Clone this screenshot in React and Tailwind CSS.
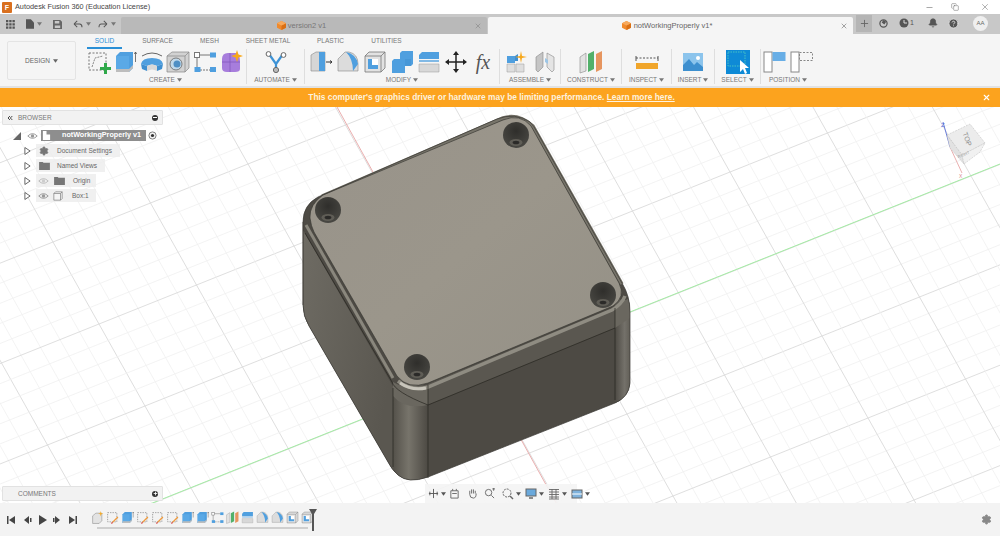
import { Fragment } from 'react';
import { ChevronsLeft, Settings, Bell, HelpCircle, Plus, X, Minus, Copy } from 'lucide-react';

const blue = '#4f9fdf';

const Caret = ({ className = '' }) => (
  <svg viewBox="0 0 6 4" className={`inline-block w-[5px] h-[4px] ${className}`}>
    <path d="M0 0H6L3 4Z" fill="currentColor" />
  </svg>
);

const Sketch = ({ className = 'w-6 h-6' }) => (
  <svg viewBox="0 0 24 24" className={className}>
    <rect x="2" y="3" width="17" height="17" fill="none" stroke="#777" strokeWidth="1" strokeDasharray="2 1.5" />
    <path d="M5 17L8 8L16 6" fill="none" stroke="#888" strokeWidth="1" strokeDasharray="2 1" />
    <path d="M17 13h3v4h4v3h-4v4h-3v-4h-4v-3h4z" fill="#2fa84a" />
  </svg>
);
const StepSketch = ({ className }) => (
  <svg viewBox="0 0 24 24" className={className}>
    <rect x="3" y="3" width="17" height="17" fill="none" stroke="#777" strokeWidth="1.2" strokeDasharray="2.5 2" />
    <path d="M12 21L22 11" stroke="#ef9a3c" strokeWidth="2.6" />
    <path d="M10 23L12 21" stroke="#d23c3c" strokeWidth="2.4" />
  </svg>
);
const StepForm = ({ className }) => (
  <svg viewBox="0 0 24 24" className={className}>
    <path d="M3 9L9 4H20V18L15 23H3Z" fill="#e3e3e3" stroke="#888" strokeWidth="1" />
    <path d="M18 0L19 4L23 5L19 6L18 10L17 6L13 5L17 4Z" fill="#f7a81b" />
  </svg>
);
const Extrude = ({ className = 'w-6 h-6' }) => (
  <svg viewBox="0 0 24 24" className={className}>
    <path d="M3 6L7 2H20V18L16 22H3Z" fill={blue} />
    <path d="M3 6H16V22H3Z" fill="#5aa9e6" />
    <path d="M3 19H16V22H3ZM16 19L20 15V18L16 22Z" fill="#bdbdbd" />
    <path d="M22.5 2V12M21.3 4L22.5 2L23.700 4" fill="none" stroke="#555" strokeWidth="0.8" />
  </svg>
);
const Revolve = ({ className = 'w-6 h-6' }) => (
  <svg viewBox="0 0 24 24" className={className}>
    <path d="M2 6Q12 0 22 6" fill="none" stroke="#666" strokeWidth="1" />
    <path d="M1 14Q2 8 12 8Q22 8 23 14L17 16Q12 13 7 16Z" fill={blue} />
    <path d="M1 14L7 16V21L2 19ZM23 14L17 16V21L22 19Z" fill="#3f8fd0" />
    <path d="M7 16Q12 13 17 16V21Q12 18 7 21Z" fill="#d8d8d8" />
  </svg>
);
const Hole = ({ className = 'w-6 h-6' }) => (
  <svg viewBox="0 0 24 24" className={className}>
    <path d="M1 6L6 2H23V18L19 22H1Z" fill="#d2d2d2" stroke="#888" strokeWidth="0.7" />
    <path d="M1 6H19V22M19 6L23 2" fill="none" stroke="#888" strokeWidth="0.7" />
    <circle cx="10" cy="14" r="6" fill="#c2d9ea" stroke="#666" strokeWidth="0.8" />
    <circle cx="11" cy="14" r="3.5" fill="#4f8fc4" />
  </svg>
);
const Pattern = ({ className = 'w-6 h-6' }) => (
  <svg viewBox="0 0 24 24" className={className}>
    <path d="M5 5H17M4 7V18" stroke="#777" strokeWidth="1" fill="none" />
    <path d="M7 20H17" stroke="#777" strokeWidth="1" strokeDasharray="2 1" />
    <rect x="1.5" y="2.5" width="5" height="5" fill="#fff" stroke="#777" />
    <rect x="17" y="2.5" width="6" height="5" fill={blue} />
    <rect x="1.5" y="17" width="6" height="5" fill={blue} />
    <rect x="17" y="17" width="6" height="5" fill={blue} />
  </svg>
);
const Form = ({ className = 'w-6 h-6' }) => (
  <svg viewBox="0 0 24 24" className={className}>
    <path d="M3 9Q3 3 9 3H17Q21 5 21 11V19Q21 22 16 22H8Q3 22 3 18Z" fill="#a77ddc" />
    <path d="M11 3V22M3 12H21" stroke="#8458bc" strokeWidth="0.8" fill="none" />
    <path d="M18 0L19.500 4.500L24 6L19.500 7.500L18 12L16.500 7.500L12 6L16.500 4.500Z" fill="#f7a81b" />
  </svg>
);
const Automate = ({ className = 'w-6 h-6' }) => (
  <svg viewBox="0 0 24 24" className={className}>
    <path d="M5 4L12 14L19 4M12 14V20" fill="none" stroke="#3e93d6" strokeWidth="2.2" />
    <circle cx="4.5" cy="4" r="2.4" fill="#fff" stroke="#666" />
    <circle cx="19.5" cy="5" r="2.4" fill="#fff" stroke="#666" />
    <circle cx="12" cy="20" r="2.6" fill="#bbb" stroke="#666" />
  </svg>
);
const PressPull = ({ className = 'w-6 h-6' }) => (
  <svg viewBox="0 0 24 24" className={className}>
    <path d="M2 5L7 2H16V21H7L2 21Z" fill="#d6d6d6" stroke="#888" strokeWidth="0.6" />
    <path d="M10 2H16V21H10Z" fill={blue} />
    <path d="M17 12H23M21 10.500L23 12L21 13.500" stroke="#333" strokeWidth="1" fill="none" />
  </svg>
);
const Fillet = ({ className = 'w-6 h-6' }) => (
  <svg viewBox="0 0 24 24" className={className}>
    <path d="M2 9L9 2H13Q22 4 22 14V21H2Z" fill="#dcdcdc" stroke="#888" strokeWidth="0.6" />
    <path d="M10 2Q20 4 22 14L17 21Q17 9 10 2Z" fill={blue} />
  </svg>
);
const Shell = ({ className = 'w-6 h-6' }) => (
  <svg viewBox="0 0 24 24" className={className}>
    <path d="M2 6L6 2H22V18L18 22H2Z" fill="#e2e2e2" stroke="#777" strokeWidth="0.8" />
    <path d="M2 6H18V22M18 6L22 2" fill="none" stroke="#777" strokeWidth="0.8" />
    <path d="M5 9H15V19H5Z" fill="#fff" />
    <path d="M5 9H9V15H15V19H5Z" fill={blue} />
  </svg>
);
const Combine = ({ className = 'w-6 h-6' }) => (
  <svg viewBox="0 0 24 24" className={className}>
    <path d="M10 3L12 1H23V14L21 16H15V23H2V11L4 9H10Z" fill={blue} />
    <path d="M12 9H21V16H15V9Z" fill="#3f8fd0" opacity="0.5" />
  </svg>
);
const Offset = ({ className = 'w-6 h-6' }) => (
  <svg viewBox="0 0 24 24" className={className}>
    <path d="M2 5L5 2H22V9H2Z" fill={blue} />
    <path d="M2 11H22" stroke="#4f9fdf" strokeWidth="1.4" />
    <path d="M2 14H22V22H2Z" fill="#d8d8d8" stroke="#999" strokeWidth="0.5" />
  </svg>
);
const Move = ({ className = 'w-6 h-6' }) => (
  <svg viewBox="0 0 24 24" className={className}>
    <path d="M12 3V21M3 12H21" stroke="#222" strokeWidth="1.5" />
    <path d="M12 1L15 5H9ZM12 23L15 19H9ZM1 12L5 9V15ZM23 12L19 9V15Z" fill="#222" />
  </svg>
);
const Joint = ({ className = 'w-6 h-6' }) => (
  <svg viewBox="0 0 24 24" className={className}>
    <path d="M3 6H11V13H3Z" fill={blue} />
    <path d="M11 6L14 4V11H11Z" fill="#3f8fd0" />
    <path d="M3 14H11V22H3ZM12 14H20V22H12Z" fill="#dedede" stroke="#999" strokeWidth="0.5" />
    <path d="M17 1L18 6L23 7L18 8L17 13L16 8L11 7L16 6Z" fill="#f7a81b" />
  </svg>
);
const Joint2 = ({ className = 'w-6 h-6' }) => (
  <svg viewBox="0 0 24 24" className={className}>
    <path d="M3 7L10 2V17L5 22L3 20Z" fill="#c5c5c5" stroke="#888" strokeWidth="0.6" />
    <path d="M21 7L14 3V17L19 22L21 20Z" fill="#e4e4e4" stroke="#888" strokeWidth="0.6" />
    <path d="M12 8L15 10V14L12 12Z" fill="#9dc6e6" />
  </svg>
);
const Construct = ({ className = 'w-6 h-6' }) => (
  <svg viewBox="0 0 24 24" className={className}>
    <path d="M1 7L7 3V21L1 23Z" fill="#e2e2e2" stroke="#888" strokeWidth="0.6" />
    <path d="M9 4L15 1V19L9 22Z" fill="#52b06a" />
    <path d="M17 4L23 1V19L17 22Z" fill="#e6955f" />
  </svg>
);
const Inspect = ({ className = 'w-6 h-6' }) => (
  <svg viewBox="0 0 24 24" className={className}>
    <rect x="1" y="13" width="22" height="6" fill="#f0a52a" />
    <path d="M1 8H23" stroke="#555" strokeDasharray="2 1.5" strokeWidth="1" />
    <path d="M1 6V11M23 6V11" stroke="#555" strokeWidth="1" />
  </svg>
);
const Insert = ({ className = 'w-6 h-6' }) => (
  <svg viewBox="0 0 24 24" className={className}>
    <rect x="2" y="3" width="20" height="18" fill="#8cc4ec" />
    <path d="M2 21V15L8 9L13 15L16 12L22 17V21Z" fill="#3d8fcf" />
    <circle cx="17" cy="8" r="2" fill="#fff" />
  </svg>
);
const Select = () => (
  <svg viewBox="0 0 24 24" className="w-6 h-6">
    <rect x="0" y="0" width="24" height="24" fill="#0e8ad6" />
    <rect x="2" y="2" width="17" height="14" fill="none" stroke="#57d0c0" strokeWidth="0.8" strokeDasharray="1.5 1" />
    <path d="M14 10V22L17 19L19 24L21 23L19 18H23Z" fill="#fff" />
  </svg>
);
const Align = ({ active }) => (
  <svg viewBox="0 0 24 24" className="w-6 h-6">
    <rect x="1" y="2" width="8" height="20" fill="#fff" stroke="#888" />
    {active
      ? <rect x="9.5" y="2" width="13" height="9" fill="#68aee6" />
      : <rect x="9.5" y="2.5" width="13" height="8" fill="none" stroke="#888" strokeDasharray="2 1.5" />}
  </svg>
);

const FolderIcon = () => (
  <svg viewBox="0 0 12 10" className="w-[11px] h-[9px]">
    <path d="M0 1H4L5 2H12V10H0Z" fill="#777" />
  </svg>
);
const Eye = ({ off }) => (
  <svg viewBox="0 0 14 10" className="w-[11px] h-[8px]">
    <path d="M1 5Q7 -1 13 5Q7 11 1 5Z" fill="none" stroke={off ? '#bbb' : '#999'} strokeWidth="1.2" />
    <circle cx="7" cy="5" r="2.2" fill={off ? '#ccc' : '#999'} />
  </svg>
);
const Arrow = () => (
  <svg viewBox="0 0 8 10" className="w-[7px] h-[10px] shrink-0">
    <path d="M1 1L7 5L1 9Z" fill="#fff" stroke="#555" />
  </svg>
);

const menuTabs = [
  ['SOLID', 'w-[35px] text-[#2a8fd6] border-b-2 border-[#2a8fd6]'],
  ['SURFACE', 'w-[35px] ml-[18px]'],
  ['MESH', 'w-[35px] ml-[17px]'],
  ['SHEET METAL', 'w-[50px] ml-[16px]'],
  ['PLASTIC', 'w-[35px] ml-[20px]'],
  ['UTILITIES', 'w-[35px] ml-[21px]'],
];

const ToolGroup = ({ label, width, gap, children, border = true }) => (
  <div className={`flex flex-col items-center ${width} ${border ? 'border-r border-[#dedede]' : ''}`}>
    <div className={`flex h-[25px] items-center ${gap}`}>{children}</div>
    <div className="mt-[2px] flex items-center gap-[2px] text-[6.5px] leading-[8px] text-[#777]">
      {label} <Caret />
    </div>
  </div>
);

const timelineIcons = [StepForm, StepSketch, Extrude, StepSketch, StepSketch, StepSketch, Extrude, Extrude, Pattern, Construct, Offset, Fillet, Fillet, Shell, Shell];

// lattice of the ground plane, measured from where the red and green axes cross
const origin = [483.5, 371];
const alongGreen = [19.5, -7.8];
const alongRed = [9.2, 16.4];
const steps = Array.from({ length: 121 }, (_, i) => i - 60);

function gridLine(i, stepDir, lineDir) {
  const x = origin[0] + i * stepDir[0];
  const y = origin[1] + i * stepDir[1];
  return { x1: x - lineDir[0] * 100, y1: y - lineDir[1] * 100, x2: x + lineDir[0] * 100, y2: y + lineDir[1] * 100 };
}

const bodyPath = 'M303 222Q303 205 318 197L497 119Q515 112 530 122Q534 126 537 132L622 283Q630 296 630 312L630 383Q629 397 615 403L428 477Q408 484 398 475Q392 470 388 462L309 326Q303 316 303 305Z';

function Viewport() {
  return (
    <svg viewBox="0 107 1000 396" className="absolute inset-0 w-full h-full">
      <defs>
        <linearGradient id="leftFace" x1="0" y1="0" x2="1" y2="0.5">
          <stop offset="0" stopColor="#6f6c64" />
          <stop offset="1" stopColor="#5a5750" />
        </linearGradient>
        <linearGradient id="cornerA" x1="0" y1="0" x2="1" y2="0">
          <stop offset="0" stopColor="#54514a" />
          <stop offset="0.45" stopColor="#77746b" />
          <stop offset="1" stopColor="#4c4943" />
        </linearGradient>
        <linearGradient id="cornerB" x1="0" y1="0" x2="1" y2="0">
          <stop offset="0" stopColor="#4d4a44" />
          <stop offset="0.6" stopColor="#74716a" />
          <stop offset="1" stopColor="#5f5c54" />
        </linearGradient>
        <linearGradient id="topFace" x1="0" y1="0" x2="1" y2="1">
          <stop offset="0" stopColor="#98938a" />
          <stop offset="0.5" stopColor="#9b968b" />
          <stop offset="1" stopColor="#949086" />
        </linearGradient>
        <radialGradient id="hole" cx="0.5" cy="0.35" r="0.7">
          <stop offset="0" stopColor="#2f2e2b" />
          <stop offset="1" stopColor="#4b4a45" />
        </radialGradient>
        <clipPath id="body">
          <path d={bodyPath} />
        </clipPath>
      </defs>

      {steps.map((i) => (
        <Fragment key={i}>
          <line {...gridLine(i, alongGreen, [4.6, 8.2])} stroke={i % 5 === 0 ? '#d6d6d6' : '#f0f0f0'} strokeWidth="0.8" />
          <line {...gridLine(i, alongRed, [9.75, -3.9])} stroke={i % 5 === 0 ? '#d6d6d6' : '#f0f0f0'} strokeWidth="0.8" />
        </Fragment>
      ))}
      <line x1="337" y1="107" x2="570" y2="528" stroke="#e8a5a5" strokeWidth="0.9" />
      <line x1="100" y1="524" x2="1000" y2="164" stroke="#a4eca4" strokeWidth="1" />

      <path d={bodyPath} fill="#4d4a44" />
      <g clipPath="url(#body)">
        <path d="M300 225L395 390V480L300 320Z" fill="url(#leftFace)" />
        <rect x="393" y="385" width="35" height="100" fill="url(#cornerA)" />
        <rect x="615" y="300" width="16" height="110" fill="url(#cornerB)" />
        <path d="M428 384L615 307V328L428 405Z" fill="#5a5750" />
        <path d="M393 382Q410 392 428 386V405Q405 410 393 396Z" fill="#6a675f" />
        <path d="M615 305L630 298V318L615 328Z" fill="#6a675f" />
      </g>
      <path d="M398 381Q412 392 428 387L612 310Q622 304 625 296" fill="none" stroke="#8f8c82" strokeWidth="3.5" />
      <path d="M400 383Q412 391 426 388" fill="none" stroke="#c8c5bb" strokeWidth="3" />
      <path d="M306 225L393 378" fill="none" stroke="#8a877d" strokeWidth="3" />
      <path d="M322 196L503 118Q518 113 533 126L622 284" fill="none" stroke="#77746a" strokeWidth="3.5" />

      <path d="M310 218Q309 205 323 195L503 120Q520 113 531 126L619 283Q626 297 613 306L428 383Q408 390 397 376L314 232Q311 226 310 218Z" fill="url(#topFace)" stroke="#33322e" strokeWidth="0.6" />

      {[[328, 210], [516, 135], [603, 295], [417, 367]].map(([cx, cy]) => (
        <g key={cx}>
          <circle cx={cx} cy={cy} r="13" fill="url(#hole)" />
          <ellipse cx={cx} cy={cy + 7.5} rx="6.5" ry="3.4" fill="#5f5d56" />
          <ellipse cx={cx} cy={cy + 7.5} rx="3.4" ry="1.8" fill="#2b2a28" />
        </g>
      ))}

      <g fill="none" stroke="#26251f" strokeWidth="0.7">
        <path d="M305 233L392 382Q395 392 428 405L615 328" />
        <path d="M393 388V467M428 385V478M615 308V400" />
        <path d="M303 305V222" stroke="#4a4840" />
        <path d={bodyPath} stroke="#3a3833" />
      </g>

      {/* view cube */}
      <line x1="943" y1="122" x2="950" y2="147" stroke="#5a6fd6" strokeWidth="0.9" />
      <line x1="950" y1="147" x2="962" y2="173" stroke="#e39a9a" strokeWidth="0.8" />
      <path d="M947 135L970 124L985 143L962 155Z" fill="#ececec" stroke="#bbb" strokeWidth="0.5" strokeDasharray="2 1" />
      <path d="M947 135L962 155L964 164L950 148Z" fill="#e2e2e2" stroke="#bbb" strokeWidth="0.5" strokeDasharray="2 1" />
      <path d="M962 155L985 143L980 152L964 164Z" fill="#f1f1f1" stroke="#bbb" strokeWidth="0.5" strokeDasharray="2 1" />
      <text x="965" y="140" fontSize="7" fill="#8b8b8b" transform="rotate(70 965 140)" textAnchor="middle" fontFamily="Liberation Sans, sans-serif">TOP</text>
      <text x="964" y="156" fontSize="4" fill="#a0a0a0" transform="rotate(-22 964 156)" textAnchor="middle" fontFamily="Liberation Sans, sans-serif">RIGHT</text>
      <text x="941" y="127" fontSize="6" fill="#5a6fd6" fontFamily="Liberation Sans, sans-serif">Z</text>
      <text x="959" y="178" fontSize="5" fill="#d98a8a" fontFamily="Liberation Sans, sans-serif">X</text>
    </svg>
  );
}

function TreeRow({ arrow = true, eye, children, pill }) {
  return (
    <div className="flex items-center h-[15px] pl-[24px]">
      {arrow && <Arrow />}
      <div className={`ml-[5px] flex h-[13px] items-center bg-[#ececec]/80 text-[6.5px] text-[#666] ${pill}`}>
        {eye}
        {children}
      </div>
    </div>
  );
}

export default function App() {
  return (
    <div className="flex h-[536px] w-[1000px] flex-col overflow-hidden bg-white font-['Liberation_Sans',sans-serif]">
      {/* Title bar */}
      <div className="flex h-[14px] items-center pl-[2px] pr-[10px]">
        <div className="flex h-[11px] w-[10px] items-center justify-center rounded-[1px] bg-[#d9701f]">
          <span className="text-[7px] font-bold leading-none text-white">F</span>
        </div>
        <span className="ml-[3px] text-[7.3px] text-[#444]">Autodesk Fusion 360 (Education License)</span>
        <div className="ml-auto flex items-center text-[#666]">
          <Minus className="h-[9px] w-[9px]" strokeWidth={1.5} />
          <Copy className="ml-[17px] h-[8px] w-[8px]" strokeWidth={1.5} />
          <X className="ml-[21px] h-[10px] w-[10px]" strokeWidth={1.2} />
        </div>
      </div>

      {/* Tab bar */}
      <div className="flex h-[20px] bg-[#c8c8c8]">
        <div className="flex w-[121px] items-center text-[#555]">
          <svg viewBox="0 0 10 10" className="ml-[6px] h-[9px] w-[9px]">
            <path d="M0 0h2.6v2.6H0zM3.6 0h2.6v2.6H3.6zM7.2 0h2.6v2.6H7.2zM0 3.6h2.6v2.6H0zM3.6 3.6h2.6v2.6H3.6zM7.2 3.6h2.6v2.6H7.2zM0 7.2h2.6v2.6H0zM3.6 7.2h2.6v2.6H3.6zM7.2 7.2h2.6v2.6H7.2z" fill="#555" />
          </svg>
          <svg viewBox="0 0 10 12" className="ml-[11px] h-[10px] w-[8px]">
            <path d="M0 0H6L10 4V12H0Z" fill="#555" />
          </svg>
          <Caret className="ml-[3px] text-[#777]" />
          <svg viewBox="0 0 10 10" className="ml-[11px] h-[9px] w-[9px]">
            <path d="M0 0H8L10 2V10H0ZM2 1V4H7V1ZM2 6V9H8V6Z" fill="#666" fillRule="evenodd" />
          </svg>
          <svg viewBox="0 0 12 10" className="ml-[11px] h-[8px] w-[10px]">
            <path d="M1 5L5 1M1 5L5 9M1 5H8Q11 5 11 9" fill="none" stroke="#555" strokeWidth="1.3" />
          </svg>
          <Caret className="ml-[3px] text-[#777]" />
          <svg viewBox="0 0 12 10" className="ml-[7px] h-[8px] w-[10px]">
            <path d="M11 5L7 1M11 5L7 9M11 5H4Q1 5 1 9" fill="none" stroke="#555" strokeWidth="1.3" />
          </svg>
          <Caret className="ml-[3px] text-[#777]" />
        </div>
        <div className="mt-[3px] flex w-[366px] items-center rounded-t-[2px] bg-[#b9b9b9]">
          <div className="flex flex-1 items-center justify-center pl-[8px] text-[7.5px] text-[#777]">
            <Cube />
            <span className="ml-[2px]">version2 v1</span>
          </div>
          <X className="mr-[5px] h-[8px] w-[8px] text-[#8a8a8a]" />
        </div>
        <div className="ml-px mt-[3px] flex w-[365px] items-center rounded-t-[2px] bg-[#f5f5f5]">
          <div className="flex flex-1 items-center justify-center pl-[6px] text-[7.5px] text-[#666]">
            <Cube />
            <span className="ml-[3px]">notWorkingProperly v1*</span>
          </div>
          <X className="mr-[5px] h-[8px] w-[8px] text-[#777]" />
        </div>
        <div className="flex flex-1 items-center pb-[2px] text-[#555]">
          <div className="ml-[3px] flex h-[17px] w-[16px] items-center justify-center bg-[#b5b5b5]">
            <Plus className="h-[11px] w-[11px] text-[#666]" strokeWidth={2} />
          </div>
          <svg viewBox="0 0 10 10" className="ml-[7px] h-[9px] w-[9px]">
            <circle cx="5" cy="5" r="4" fill="none" stroke="#555" strokeWidth="1.4" />
            <path d="M3 4L5 1L8 3L6 6Z" fill="#555" />
          </svg>
          <svg viewBox="0 0 10 10" className="ml-[11px] h-[10px] w-[10px]">
            <circle cx="5" cy="5" r="4.5" fill="#555" />
            <path d="M5 2V5H8" fill="none" stroke="#ddd" strokeWidth="1" />
          </svg>
          <span className="ml-[1px] text-[7px] text-[#555]">1</span>
          <Bell className="ml-[14px] h-[10px] w-[10px] fill-[#555]" />
          <HelpCircle className="ml-[10px] h-[11px] w-[11px] fill-[#555] text-[#ddd]" />
          <div className="ml-[14px] flex h-[15px] w-[15px] items-center justify-center rounded-full bg-[#efefef] text-[6px] text-[#666]">AA</div>
        </div>
      </div>

      {/* Toolbar */}
      <div className="flex h-[54px] border-b-2 border-[#e2e2e2] bg-[#f5f5f5]">
        <div className="ml-[7px] mt-[7px] flex h-[39px] w-[69px] items-center justify-center gap-[3px] rounded-[2px] border border-[#e4e4e4] text-[6.5px] text-[#666]">
          DESIGN <Caret />
        </div>
        <div className="ml-[9px] flex flex-col">
          <div className="flex h-[15px] pl-[2px] text-center text-[6.5px] leading-[13px] text-[#777]">
            {menuTabs.map(([name, cls]) => (
              <div key={name} className={`whitespace-nowrap ${cls}`}>{name}</div>
            ))}
          </div>
          <div className="flex">
            <ToolGroup label="CREATE" width="w-[162px]" gap="gap-[2.6px] -ml-[1px]">
              <Sketch /><Extrude /><Revolve /><Hole /><Pattern /><Form />
            </ToolGroup>
            <ToolGroup label="AUTOMATE" width="w-[58px]" gap="">
              <Automate />
            </ToolGroup>
            <ToolGroup label="MODIFY" width="w-[195px]" gap="gap-[3px]">
              <PressPull /><Fillet /><Shell /><Combine /><Offset /><Move />
              <span className="w-6 text-center font-['Liberation_Serif',serif] text-[20px] italic leading-6 text-[#555]">fx</span>
            </ToolGroup>
            <ToolGroup label="ASSEMBLE" width="w-[61px]" gap="gap-[5px]">
              <Joint /><Joint2 />
            </ToolGroup>
            <ToolGroup label="CONSTRUCT" width="w-[61px]" gap="">
              <Construct />
            </ToolGroup>
            <ToolGroup label="INSPECT" width="w-[50px]" gap="">
              <Inspect />
            </ToolGroup>
            <ToolGroup label="INSERT" width="w-[43px]" gap="">
              <Insert />
            </ToolGroup>
            <ToolGroup label="SELECT" width="w-[46px]" gap="">
              <Select />
            </ToolGroup>
            <ToolGroup label="POSITION" width="w-[54px]" gap="gap-[3px]" border={false}>
              <Align active /><Align />
            </ToolGroup>
          </div>
        </div>
      </div>

      {/* Warning banner */}
      <div className="relative flex h-[19px] items-center justify-center bg-[#fca31e] text-[8.4px] font-bold text-[#fdf2de]">
        <span className="-ml-[17px]">This computer's graphics driver or hardware may be limiting performance. <span className="underline">Learn more here.</span></span>
        <X className="absolute right-[9px] h-[9px] w-[9px] text-white" strokeWidth={3} />
      </div>

      {/* Canvas */}
      <div className="relative flex-1 overflow-hidden bg-white">
        <Viewport />

        <div className="absolute left-[2px] top-[3px] flex h-[15px] w-[161px] items-center rounded-[1px] border border-[#e2e2e2] bg-[#f2f2f2] text-[6.5px] text-[#777]">
          <ChevronsLeft className="ml-[3px] h-[8px] w-[8px] text-[#444]" strokeWidth={3} />
          <span className="ml-[4px]">BROWSER</span>
          <span className="ml-auto mr-[4px] flex h-[6px] w-[6px] items-center justify-center rounded-full bg-[#333]">
            <span className="h-px w-[4px] bg-white" />
          </span>
        </div>

        <div className="absolute left-0 top-[21px] flex flex-col">
          <div className="flex h-[15px] items-center pl-[13px]">
            <svg viewBox="0 0 8 8" className="h-[8px] w-[8px]"><path d="M8 0V8H0Z" fill="#666" /></svg>
            <div className="ml-[6px]"><Eye /></div>
            <div className="ml-[3px] flex h-[11px] w-[105px] items-center bg-[#8e8e8e]">
              <svg viewBox="0 0 10 10" className="ml-px h-[9px] w-[9px]"><path d="M1 0H5V4H9V10H1Z" fill="#fff" /></svg>
              <span className="ml-[11px] text-[7.2px] font-bold text-white">notWorkingProperly v1</span>
            </div>
            <svg viewBox="0 0 10 10" className="ml-[2px] h-[9px] w-[9px]">
              <circle cx="5" cy="5" r="4" fill="#f2f2f2" stroke="#555" strokeWidth="0.8" />
              <circle cx="5" cy="5" r="1.8" fill="#333" />
            </svg>
          </div>
          <TreeRow pill="w-[84px] pl-[3px]">
            <Settings className="h-[10px] w-[10px] fill-[#777] text-[#777]" />
            <span className="ml-[8px]">Document Settings</span>
          </TreeRow>
          <TreeRow pill="w-[69px] pl-[3px]">
            <FolderIcon />
            <span className="ml-[7px]">Named Views</span>
          </TreeRow>
          <TreeRow pill="w-[60px] pl-[2px]" eye={<Eye off />}>
            <span className="ml-[5px]"><FolderIcon /></span>
            <span className="ml-[8px]">Origin</span>
          </TreeRow>
          <TreeRow pill="w-[60px] pl-[2px]" eye={<Eye />}>
            <svg viewBox="0 0 12 12" className="ml-[4px] h-[10px] w-[10px]">
              <path d="M1 3L3 1H11V9L9 11H1ZM1 3H9V11M9 3L11 1" fill="#f5f5f5" stroke="#777" strokeWidth="0.8" />
            </svg>
            <span className="ml-[9px]">Box:1</span>
          </TreeRow>
        </div>

        <div className="absolute bottom-[2px] left-[2px] flex h-[15px] w-[161px] items-center rounded-[1px] border border-[#e2e2e2] bg-[#f2f2f2] text-[6.5px] text-[#777]">
          <span className="ml-[15px]">COMMENTS</span>
          <span className="ml-auto mr-[4px] flex h-[6px] w-[6px] items-center justify-center rounded-full bg-[#333]">
            <Plus className="h-[5px] w-[5px] text-white" strokeWidth={4} />
          </span>
        </div>

        {/* Navigation bar */}
        <div className="absolute bottom-0 left-[425px] flex h-[19px] w-[152px] items-center bg-[#f4f4f4]/90 pl-[3px] text-[#666]">
          <NavIcons />
        </div>
      </div>

      {/* Timeline */}
      <div className="relative flex h-[33px] items-center bg-[#f3f3f3]">
        <div className="ml-[6px] flex items-center text-[#444]">
          <Player d="M1 1H2.5V9H1ZM9 1V9L3 5Z" />
          <Player d="M7 1V9L2 5ZM8 3H9.5V7H8Z" className="ml-[6px]" />
          <Player d="M2 0L10 5L2 10Z" className="ml-[5px]" />
          <Player d="M3 1V9L8 5ZM1 3H2.5V7H1Z" className="ml-[5px]" />
          <Player d="M1 1V9L7 5ZM7.5 1H9V9H7.5Z" className="ml-[6px]" />
        </div>
        <div className="ml-[13px] flex flex-col">
          <div className="flex gap-[2px]">
            {timelineIcons.map((Icon, i) => (
              <Fragment key={i}>
                <Icon className="h-[13px] w-[13px]" />
              </Fragment>
            ))}
          </div>
          <div className="ml-[6px] mt-[2px] h-[3px] w-[211px] border-b-2 border-[#cfcfcf]" />
        </div>
        <svg viewBox="0 0 8 22" className="absolute left-[309px] top-[6px] h-[22px] w-[8px]">
          <path d="M0 0H8L5 5V22H3V5Z" fill="#555" />
        </svg>
        <Settings className="absolute right-[8px] top-[11px] h-[11px] w-[11px] fill-[#888] text-[#888]" />
      </div>
    </div>
  );
}

function Cube() {
  return (
    <svg viewBox="0 0 10 10" className="h-[9px] w-[9px]">
      <path d="M5 0L10 2.5V7.5L5 10L0 7.5V2.5Z" fill="#f08a2c" />
      <path d="M5 5L10 2.5V7.5L5 10Z" fill="#d96f14" />
      <path d="M0 2.5L5 0L10 2.5L5 5Z" fill="#f7a95c" />
    </svg>
  );
}

function Player({ d, className = '' }) {
  return (
    <svg viewBox="0 0 10 10" className={`h-[10px] w-[10px] ${className}`}>
      <path d={d} fill="#444" />
    </svg>
  );
}

function NavIcons() {
  return (
    <div className="flex items-center">
      <svg viewBox="0 0 12 12" className="h-[11px] w-[11px]">
        <path d="M6 1V11M1 6H11M2 4V8M10 4V8" stroke="#555" strokeWidth="1" fill="none" />
      </svg>
      <Caret className="ml-[2px] text-[#555]" />
      <svg viewBox="0 0 12 12" className="ml-[3px] h-[11px] w-[11px]">
        <path d="M2 3H10V11H2ZM4 3V1M8 3V1" stroke="#666" fill="none" />
        <path d="M3.5 6H8.5" stroke="#666" />
      </svg>
      <svg viewBox="0 0 12 12" className="ml-[7px] h-[11px] w-[11px]">
        <path d="M3 7V3M5 6V1.5M7 6V1.5M9 6V3M3 7Q3 11 7 11Q10 11 10 6" stroke="#666" fill="none" />
      </svg>
      <svg viewBox="0 0 12 12" className="ml-[6px] h-[11px] w-[11px]">
        <circle cx="5" cy="5" r="3.5" stroke="#666" fill="none" />
        <path d="M8 8L11 11M9 1H12M10.5 0V3" stroke="#666" />
      </svg>
      <svg viewBox="0 0 12 12" className="ml-[7px] h-[12px] w-[12px]">
        <circle cx="5" cy="5" r="4" stroke="#666" fill="none" strokeDasharray="2 1" />
        <path d="M8 8L11 11" stroke="#666" strokeWidth="1.4" />
      </svg>
      <Caret className="ml-[2px] text-[#555]" />
      <svg viewBox="0 0 12 12" className="ml-[4px] h-[12px] w-[12px]">
        <rect x="1" y="1" width="10" height="7" fill="#6aa9dc" stroke="#666" />
        <path d="M4 10H8" stroke="#666" strokeWidth="1.5" />
      </svg>
      <Caret className="ml-[2px] text-[#555]" />
      <svg viewBox="0 0 12 12" className="ml-[4px] h-[12px] w-[12px]">
        <path d="M1 1.5H11M1 4H11M1 6.5H11M1 9H11M1 11H11M4 1V11M8 1V11" stroke="#666" strokeWidth="0.9" />
      </svg>
      <Caret className="ml-[2px] text-[#555]" />
      <svg viewBox="0 0 12 12" className="ml-[4px] h-[12px] w-[12px]">
        <rect x="1" y="2" width="10" height="8" fill="#7fb2dc" stroke="#666" />
        <path d="M1 6H11" stroke="#fff" />
      </svg>
      <Caret className="ml-[2px] text-[#555]" />
    </div>
  );
}
